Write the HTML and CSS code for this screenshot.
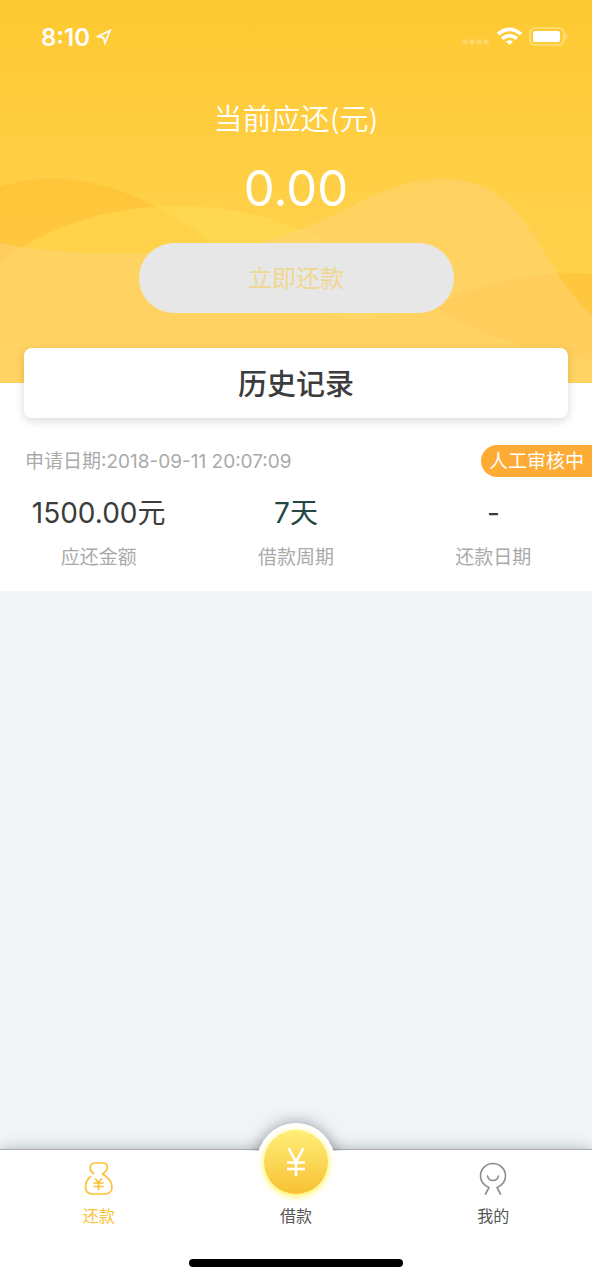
FILE: index.html
```html
<!DOCTYPE html>
<html lang="zh-CN">
<head>
	<meta charset="utf-8">
	<title>还款</title>
	<meta name="viewport" content="width=device-width, initial-scale=1">
	<link rel="stylesheet" href="styles.css">
</head>
<body>
	<header class="hero">
		<svg class="waves" viewBox="0 0 592 383" preserveAspectRatio="none" aria-hidden="true">
			<path fill="#ffb92c" fill-opacity=".42" d="M0 187C60 166 140 185 212 243C260 285 300 318 360 318C430 318 490 266 592 274V383H0Z"/>
			<path fill="#ffe45c" fill-opacity=".4" d="M0 262C60 218 120 206 180 206C300 206 370 270 440 311C490 338 530 352 592 360V383H0Z"/>
			<path fill="#ffd480" fill-opacity=".45" d="M0 243C50 254 90 253 140 253C320 262 350 179 445 179C530 179 540 272 592 315V383H0Z"/>
		</svg>

		<div class="statusBar">
			<span class="clock">8:10</span>
			<svg class="location" width="16" height="18" viewBox="0 0 16 18"><path d="M14 2.500L2 8.500L7.500 9.500L9 15Z" fill="none" stroke="#fff" stroke-width="1.800"/></svg>
			<svg class="signals" width="106" height="20" viewBox="0 0 106 20">
				<g fill="#fff" fill-opacity=".25">
					<circle cx="3" cy="15" r="2.800"/>
					<circle cx="10" cy="15" r="2.800"/>
					<circle cx="17" cy="15" r="2.800"/>
					<circle cx="24" cy="15" r="2.800"/>
				</g>
				<g fill="none" stroke="#fff" stroke-width="3.600">
					<path d="M36 7.200Q47.500 -2.500 59 7.200"/>
					<path d="M40 11.600Q47.500 5.500 55 11.600"/>
				</g>
				<path fill="#fff" d="M44 14.500Q47.500 12 51 14.500L47.500 18Z"/>
				<rect x="68" y="1" width="34" height="17" rx="5" fill="none" stroke="#fff" stroke-opacity=".4" stroke-width="1.600"/>
				<rect x="71" y="4" width="27" height="11" rx="2" fill="#fff"/>
				<path d="M103.500 6.500Q107 9.500 103.500 12.500Z" fill="#fff" fill-opacity=".5"/>
			</svg>
		</div>

		<div class="due">
			<div class="dueLabel">当前应还(元)</div>
			<div class="dueAmount">0.00</div>
			<button class="repayButton" type="button" disabled>立即还款</button>
		</div>
	</header>

	<main class="history">
		<h1 class="historyTitle">历史记录</h1>

		<section class="record">
			<div class="recordTop">
				<span class="recordDate">申请日期:2018-09-11 20:07:09</span>
				<span class="recordStatus">人工审核中</span>
			</div>
			<dl class="recordStats">
				<div class="stat">
					<dd>1500.00元</dd>
					<dt>应还金额</dt>
				</div>
				<div class="stat period">
					<dd>7天</dd>
					<dt>借款周期</dt>
				</div>
				<div class="stat">
					<dd>-</dd>
					<dt>还款日期</dt>
				</div>
			</dl>
		</section>
	</main>

	<nav class="tabBar">
		<div class="tabs">
			<a class="tab active" href="#repay">
				<svg width="32" height="36" viewBox="0 0 32 36" fill="none" stroke="currentColor" stroke-width="1.700" stroke-linecap="round" stroke-linejoin="round">
					<path d="M10.500 12.500C5 8 7 2 12 2H19.500C26 2 26 9 19.500 13C25 16 29 21 29 26.500C29 31 25 33 21 33H10C5.500 33 2.500 30.500 2.500 26.500C2.500 22 4.500 18 7.500 15.500"/>
					<path d="M12.500 18L15.500 21.500L18.500 18M11 22H20M11 25.500H20M15.500 22V28.500"/>
				</svg>
				<span>还款</span>
			</a>
			<a class="tab borrow" href="#borrow">
				<span class="coin">
					<svg width="20" height="30" viewBox="0 0 20 30" fill="none" stroke="#fff" stroke-width="2.600"><path d="M2.500 1L10 15L17.500 1M10 14V29M1 15.500H19M1 22H19"/></svg>
				</span>
				<span>借款</span>
			</a>
			<a class="tab" href="#mine">
				<svg width="32" height="36" viewBox="0 0 32 36" fill="none" stroke="#8c8c8c" stroke-width="1.600" stroke-linecap="round" stroke-linejoin="round">
					<path d="M8.500 33L12 26.500C6 24 3.500 20 3.500 15C3.500 8 9 2.500 16 2.500S28.500 8 28.500 15C28.500 20 26 24 20 26.500L23.500 33"/>
					<path d="M10.500 15C12 21 20 21 21.500 15"/>
				</svg>
				<span>我的</span>
			</a>
		</div>
		<div class="homeIndicator"></div>
	</nav>
</body>
</html>
```
FILE: styles.css
```css
* {
	box-sizing: border-box;
}

body {
	margin: 0;
	min-height: 100vh;
	display: flex;
	flex-direction: column;
	background: #f1f5f8;
	color: #3c3c3c;
	font-family: Inter, "Noto Sans CJK SC", sans-serif;
	font-size: 19px;
}

/* header */

.hero {
	position: relative;
	padding-bottom: 70px;
	background: linear-gradient(#fec931, #ffd04a 60%, #ffd24c);
	color: #fff;
}

.waves {
	position: absolute;
	top: 0;
	left: 0;
	width: 100%;
	height: 100%;
}

.statusBar {
	position: relative;
	display: flex;
	align-items: center;
	height: 74px;
	padding: 0 24px 0 41px;
}

.clock {
	margin-right: 6px;
	font-size: 24px;
	font-weight: 600;
}

.signals {
	margin-left: auto;
}

.due {
	position: relative;
	display: flex;
	flex-direction: column;
	align-items: center;
	padding-top: 26px;
}

.dueLabel {
	font-size: 29px;
	font-weight: 350;
	line-height: 40px;
}

.dueAmount {
	margin: 19px 0 24px;
	font-size: 49px;
	line-height: 60px;
}

.repayButton {
	width: 315px;
	height: 70px;
	padding: 0 0 4px;
	border: 0;
	border-radius: 35px;
	background: #e7e7e7;
	color: #f0d78f;
	font-family: inherit;
	font-size: 24px;
}

/* history list */

.history {
	flex: 1;
}

.historyTitle {
	position: relative;
	margin: -35px 24px 0;
	padding-top: 4px;
	border-radius: 8px;
	background: #fff;
	box-shadow: 0 3px 10px rgba(0, 0, 0, 0.15);
	font-size: 29px;
	font-weight: 500;
	line-height: 66px;
	text-align: center;
}

.record {
	margin-top: -35px;
	padding: 62px 0 19px;
	background: #fff;
}

.recordTop {
	display: flex;
	justify-content: space-between;
	align-items: center;
	padding-left: 25px;
	color: #aaa;
	line-height: 30px;
}

.recordDate {
	padding-top: 2px;
}

.recordStatus {
	padding: 2px 8px 0;
	border-radius: 16px 0 0 16px;
	background: #fdab34;
	color: #fff;
}

.recordStats {
	display: grid;
	grid-template-columns: repeat(3, 1fr);
	margin: 16px 0 0;
	text-align: center;
}

.stat {
	display: flex;
	flex-direction: column;
	gap: 11px;
}

.stat dd {
	margin: 0;
	font-size: 28px;
	line-height: 40px;
}

.stat dt {
	color: #aaa;
	line-height: 28px;
}

.period dd {
	color: #234744;
}

/* bottom tabs */

.tabBar {
	position: sticky;
	bottom: 0;
	padding-bottom: 13px;
	border-top: 1px solid #a9adb2;
	background: #fff;
	box-shadow: 0 0 14px rgba(50, 55, 70, 0.35);
}

.tabs {
	display: grid;
	grid-template-columns: repeat(3, 1fr);
}

.tab {
	display: flex;
	flex-direction: column;
	align-items: center;
	gap: 7px;
	padding-top: 11px;
	color: #555;
	font-size: 16px;
	line-height: 24px;
	text-decoration: none;
}

.tab.active {
	color: #fbc237;
}

.tab.borrow {
	padding-top: 0;
}

/* the coin sticks out above the bar */
.coin {
	position: relative;
	display: flex;
	align-items: center;
	justify-content: center;
	width: 64px;
	height: 64px;
	margin-top: -20px;
	margin-bottom: 3px;
	border-radius: 50%;
	background: linear-gradient(#ffef78, #f8c033);
	box-shadow: 0 2px 7px #fff23c;
}

/* white rim, its shadow is cut off at the top edge of the bar */
.coin::before {
	content: "";
	position: absolute;
	z-index: -1;
	inset: -7px;
	border-radius: 50%;
	background: #fff;
	box-shadow: 0 0 16px rgba(50, 55, 70, 0.5);
	clip-path: inset(-30px -30px 50px);
}

.homeIndicator {
	width: 36%;
	height: 8px;
	margin: 31px auto 0;
	border-radius: 4px;
	background: #000;
}
```
